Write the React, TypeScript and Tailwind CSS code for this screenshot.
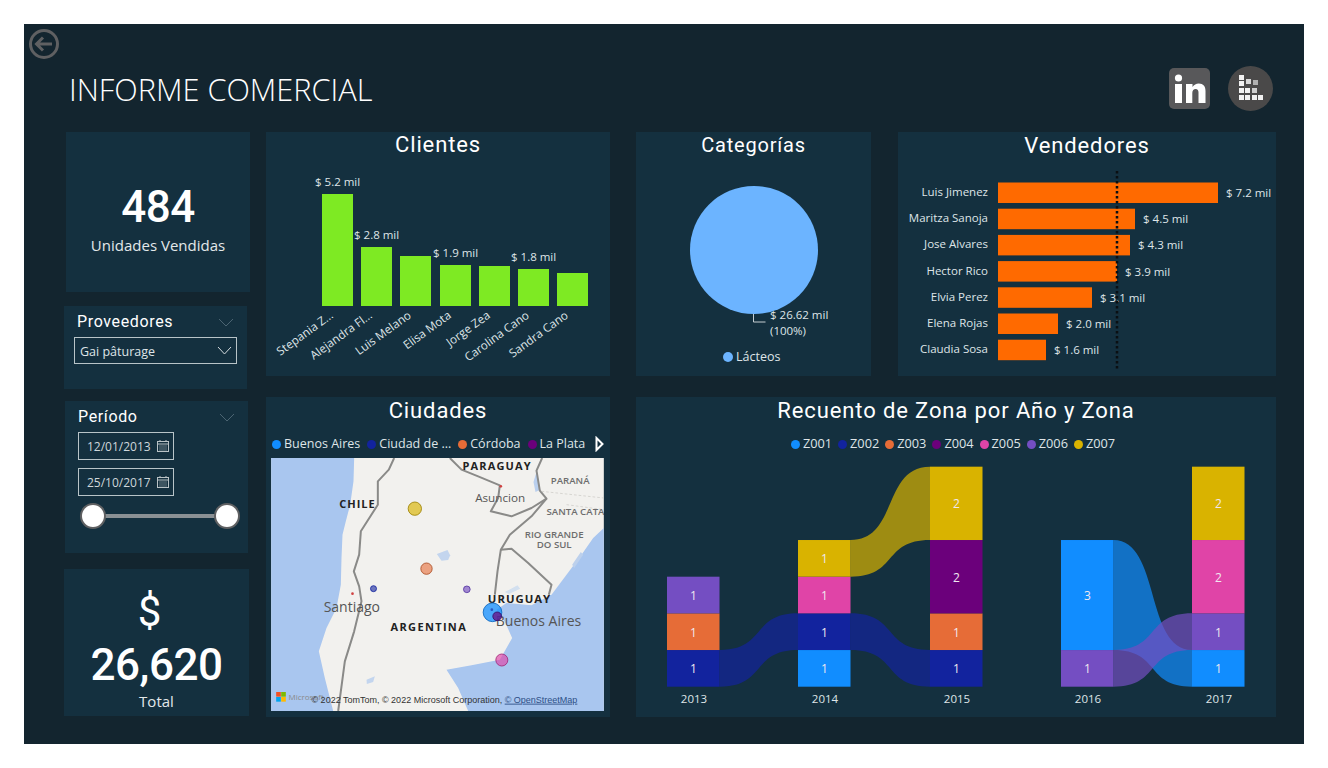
const din = "font-['Roboto',sans-serif]"
const segoe = "font-['Open_Sans',sans-serif]"

const clientes = [
  { name: 'Stepania Z...', x: 322, top: 194, value: '$ 5.2 mil', lx: 315, ly: 186 },
  { name: 'Alejandra Fl...', x: 361, top: 247, value: '$ 2.8 mil', lx: 354, ly: 239 },
  { name: 'Luis Melano', x: 400, top: 256 },
  { name: 'Elisa Mota', x: 440, top: 265, value: '$ 1.9 mil', lx: 433, ly: 257 },
  { name: 'Jorge Zea', x: 479, top: 266 },
  { name: 'Carolina Cano', x: 518, top: 269, value: '$ 1.8 mil', lx: 511, ly: 261 },
  { name: 'Sandra Cano', x: 557, top: 273 },
]

const vendedores = [
  { name: 'Luis Jimenez', w: 220, value: '$ 7.2 mil' },
  { name: 'Maritza Sanoja', w: 137, value: '$ 4.5 mil' },
  { name: 'Jose Alvares', w: 132, value: '$ 4.3 mil' },
  { name: 'Hector Rico', w: 119, value: '$ 3.9 mil' },
  { name: 'Elvia Perez', w: 94, value: '$ 3.1 mil' },
  { name: 'Elena Rojas', w: 60, value: '$ 2.0 mil' },
  { name: 'Claudia Sosa', w: 48, value: '$ 1.6 mil' },
]

const zonas = [
  { name: 'Z001', color: 'bg-[#118dff]' },
  { name: 'Z002', color: 'bg-[#12239e]' },
  { name: 'Z003', color: 'bg-[#e66c37]' },
  { name: 'Z004', color: 'bg-[#6b007b]' },
  { name: 'Z005', color: 'bg-[#e044a7]' },
  { name: 'Z006', color: 'bg-[#744ec2]' },
  { name: 'Z007', color: 'bg-[#d9b300]' },
]

const ciudades = [
  { name: 'Buenos Aires', color: 'bg-[#118dff]' },
  { name: 'Ciudad de ...', color: 'bg-[#12239e]' },
  { name: 'Córdoba', color: 'bg-[#e66c37]' },
  { name: 'La Plata', color: 'bg-[#6b007b]' },
]

// y of each stacked unit, bottom to top
const lvl = (n: number) => 686.7 - n * 36.67

const columnas = [
  {
    x: 667,
    year: '2013',
    segs: [
      { c: '#12239e', from: 0, n: 1 },
      { c: '#e66c37', from: 1, n: 1 },
      { c: '#744ec2', from: 2, n: 1 },
    ],
  },
  {
    x: 798,
    year: '2014',
    segs: [
      { c: '#118dff', from: 0, n: 1 },
      { c: '#12239e', from: 1, n: 1 },
      { c: '#e044a7', from: 2, n: 1 },
      { c: '#d9b300', from: 3, n: 1 },
    ],
  },
  {
    x: 930,
    year: '2015',
    segs: [
      { c: '#12239e', from: 0, n: 1 },
      { c: '#e66c37', from: 1, n: 1 },
      { c: '#6b007b', from: 2, n: 2 },
      { c: '#d9b300', from: 4, n: 2 },
    ],
  },
  {
    x: 1061,
    year: '2016',
    segs: [
      { c: '#744ec2', from: 0, n: 1 },
      { c: '#118dff', from: 1, n: 3 },
    ],
  },
  {
    x: 1192,
    year: '2017',
    segs: [
      { c: '#118dff', from: 0, n: 1 },
      { c: '#744ec2', from: 1, n: 1 },
      { c: '#e044a7', from: 2, n: 2 },
      { c: '#d9b300', from: 4, n: 2 },
    ],
  },
]

const ribbon = (x0: number, a0: number, a1: number, x1: number, b0: number, b1: number) => {
  const m0 = x0 + (x1 - x0) * 0.6
  const m1 = x1 - (x1 - x0) * 0.6
  return `M${x0} ${a0}C${m0} ${a0} ${m1} ${b0} ${x1} ${b0}L${x1} ${b1}C${m1} ${b1} ${m0} ${a1} ${x0} ${a1}Z`
}

const cintas = [
  { c: '#12239e', d: ribbon(719.5, lvl(1), lvl(0), 798, lvl(2), lvl(1)) },
  { c: '#12239e', d: ribbon(850.5, lvl(2), lvl(1), 930, lvl(1), lvl(0)) },
  { c: '#d9b300', d: ribbon(850.5, lvl(4), lvl(3), 930, lvl(6), lvl(4)) },
  { c: '#118dff', d: ribbon(1113.5, lvl(4), lvl(1), 1192, lvl(1), lvl(0)) },
  { c: '#744ec2', d: ribbon(1113.5, lvl(1), lvl(0), 1192, lvl(2), lvl(1)) },
]

const chileBorder = 'M388 190L372 225 339 260 339 330 288 410 283 480 267 530 283 575 290 620 268 710 240 800 232 860 220 949'

function Panel({ className, children }: { className: string; children?: React.ReactNode }) {
  return <div className={`bg-[#14303f] ${className}`}>{children}</div>
}

function Title({ children, className = 'text-[22px]' }: { children: React.ReactNode; className?: string }) {
  return (
    <h2 className={`${din} text-center leading-[26px] tracking-[0.04em] text-white ${className}`}>
      {children}
    </h2>
  )
}

function Chevron({ className, w = 16 }: { className: string; w?: number }) {
  return (
    <svg className={className} width={w} height="9" viewBox={`0 0 ${w} 9`} fill="none" stroke="currentColor" strokeWidth="1">
      <path d={`M1 1l${w / 2 - 1} 7 ${w / 2 - 1}-7`} />
    </svg>
  )
}

function Fecha({ value }: { value: string }) {
  return (
    <div className="flex items-center justify-between w-[96px] h-[28px] border border-[#b8c4c8] pl-[8px] pr-[3px]">
      <span className={`${segoe} text-[12px] pt-[1px] text-[#cfd7db]`}>{value}</span>
      <svg width="14" height="14" viewBox="0 0 14 14" fill="none" stroke="#b9c2c6" strokeWidth="1">
        <rect x="1.5" y="2.5" width="11" height="10" />
        <path d="M1.5 5h11M4 1v2M10 1v2" />
        <path d="M3.5 7h7M3.5 9h7M3.5 11h7" strokeDasharray="1 1" />
      </svg>
    </div>
  )
}

function MapaSvg() {
  // drawn in a 3x grid so the coast points are easy to place
  return (
    <svg className="block w-[333px] h-[253px]" viewBox="19 190 998 759">
      <defs>
        <filter id="suave" x="-5%" y="-5%" width="110%" height="110%">
          <feGaussianBlur stdDeviation="2" />
        </filter>
      </defs>
      <rect x="19" y="190" width="998" height="759" fill="#f2f1ee" />
      <g filter="url(#suave)">
        <path
          d="M19 190H268L266 260 256 330 243 380 233 420 230 490 228 570 215 640 185 700 162 770 180 850 205 949H19Z"
          fill="#a9c6ef"
        />
        <path
          d="M1017 400L985 430 950 480 905 540 860 600 800 632 725 625 695 645 722 685 742 730 705 795 620 812 545 825 580 880 610 949H1017Z"
          fill="#a9c6ef"
        />
        <path d="M816 228L826 285 812 292 806 262Z" fill="#b9cfee" />
        <path d="M516 478L548 466 556 482 550 496 530 498Z" fill="#c3d5ee" />
        <path d="M720 592L758 572 766 582 732 598Z" fill="#d3e0ef" />
        <path d="M922 510L948 472 955 480 928 520Z" fill="#bcd0ec" />
        <path d="M305 855L330 845 325 862 306 868Z" fill="#c3d5ee" />
        <g fill="none" stroke="#8a8a88" strokeWidth="6" strokeLinejoin="round">
          <path d={chileBorder} />
          <path d="M555 190L590 225 640 245 705 272 700 310 678 350 740 365 800 340 845 312 825 288 815 228 832 190" />
          <path d="M845 312L800 365 735 420 708 465 698 530 690 600" />
          <path d="M708 465L740 462 790 505 860 570 852 600" />
        </g>
        <path d="M830 290L1017 310M905 330L1017 345" fill="none" stroke="#c9c7c2" strokeWidth="2" strokeDasharray="8 6" />
      </g>
      <g className="font-['Open_Sans',sans-serif]">
        <text x="278" y="340" textAnchor="middle" fontSize="33" fontWeight="700" letterSpacing="3" fill="#222">CHILE</text>
        <text x="697" y="226" textAnchor="middle" fontSize="33" fontWeight="700" letterSpacing="3.5" fill="#222">PARAGUAY</text>
        <text x="492" y="708" textAnchor="middle" fontSize="33" fontWeight="700" letterSpacing="4" fill="#222">ARGENTINA</text>
        <text x="764" y="624" textAnchor="middle" fontSize="34" fontWeight="700" letterSpacing="3" fill="#222">URUGUAY</text>
        <text x="916" y="269" textAnchor="middle" fontSize="29" fontWeight="600" fill="#6d6d6d">PARANÁ</text>
        <text x="932" y="360" textAnchor="middle" fontSize="29" fontWeight="600" fill="#6d6d6d">SANTA CATA</text>
        <text x="868" y="429" textAnchor="middle" fontSize="29" fontWeight="600" fill="#6d6d6d">RIO GRANDE</text>
        <text x="868" y="459" textAnchor="middle" fontSize="29" fontWeight="600" fill="#6d6d6d">DO SUL</text>
        <text x="706" y="323" textAnchor="middle" fontSize="35" fill="#555">Asuncion</text>
        <text x="261" y="651" textAnchor="middle" fontSize="42" fill="#555">Santiago</text>
        <text x="821" y="694" textAnchor="middle" fontSize="42" fill="#555">Buenos Aires</text>
      </g>
      <circle cx="708" cy="275" r="4" fill="#d04040" />
      <circle cx="263" cy="597" r="4" fill="#d04040" />
      <circle cx="450" cy="342" r="20" fill="#d9b300" fillOpacity="0.65" stroke="#9c8100" strokeWidth="2.5" />
      <circle cx="485" cy="522" r="17" fill="#e66c37" fillOpacity="0.6" stroke="#a94a20" strokeWidth="2.5" />
      <circle cx="326" cy="582" r="9" fill="#12239e" fillOpacity="0.6" stroke="#12239e" strokeWidth="2.5" />
      <circle cx="606" cy="584" r="10" fill="#744ec2" fillOpacity="0.65" stroke="#5435a0" strokeWidth="2.5" />
      <circle cx="683" cy="653" r="28" fill="#118dff" fillOpacity="0.75" stroke="#0a65bd" strokeWidth="2.5" />
      <circle cx="681" cy="645" r="4" fill="#12239e" fillOpacity="0.6" />
      <circle cx="697" cy="665" r="13" fill="#6b007b" fillOpacity="0.7" stroke="#32106b" strokeWidth="2.5" />
      <circle cx="711" cy="796" r="18" fill="#e044a7" fillOpacity="0.65" stroke="#a02878" strokeWidth="2.5" />
      <g>
        <rect x="34" y="892" width="14" height="14" fill="#f25022" />
        <rect x="49" y="892" width="14" height="14" fill="#7fba00" />
        <rect x="34" y="907" width="14" height="14" fill="#00a4ef" />
        <rect x="49" y="907" width="14" height="14" fill="#ffb900" />
        <text x="71" y="916" fontSize="24" fill="#8a8a8a" className="font-['Open_Sans',sans-serif]">Microsoft</text>
      </g>
      <text x="140" y="924" fontSize="27" fill="#333" className="font-['Liberation_Sans',sans-serif]">
        © 2022 TomTom, © 2022 Microsoft Corporation,{' '}
        <tspan fill="#2d4f86" textDecoration="underline">© OpenStreetMap</tspan>
      </text>
    </svg>
  )
}

export default function App() {
  return (
    <div className="w-[1328px] h-[768px] bg-white p-[24px] overflow-hidden">
      <div className="w-[1280px] h-[720px] bg-[#13252f] flex flex-col">
        <header className="h-[108px] pl-[5px] pt-[5px]">
          <svg className="block" width="30" height="30" viewBox="0 0 30 30" fill="none" stroke="#5f6062" strokeWidth="3">
            <circle cx="15" cy="15" r="13.5" />
            <path d="M23 15H8M14 8.5L7.5 15l6.5 6.5" />
          </svg>
          <div className="flex items-start justify-between pl-[40px] pr-[31px]">
            <h1 className={`${segoe} font-light text-[30.7px] leading-[40px] mt-[10px] text-white`}>INFORME COMERCIAL</h1>
            <div className="flex items-center gap-[18px] mt-[7px]">
              <svg width="41" height="41" viewBox="0 0 41 41">
                <rect width="41" height="41" rx="5" fill="#58585a" />
                <circle cx="9.5" cy="10" r="3.6" fill="#fff" />
                <rect x="6" y="16" width="7" height="19" fill="#fff" />
                <path d="M17 16h6.5v3c1.5-2.3 3.6-3.5 6.3-3.5 4.5 0 6.7 2.8 6.7 7.5V35h-7V24.5c0-2.3-.9-3.5-2.8-3.5-2 0-3.4 1.3-3.4 3.9V35H17Z" fill="#fff" />
              </svg>
              <svg width="45" height="45" viewBox="0 0 45 45">
                <circle cx="22.5" cy="22.5" r="22.5" fill="#4a4949" />
                <g fill="#f1f1f1">
                  <rect x="11" y="9" width="5" height="5" />
                  <rect x="11" y="15" width="5" height="5" />
                  <rect x="11" y="22" width="5" height="5" />
                  <rect x="17" y="22" width="5" height="5" />
                  <rect x="11" y="29" width="5" height="5" />
                  <rect x="17" y="29" width="5" height="5" />
                  <rect x="24" y="29" width="5" height="5" />
                  <rect x="30" y="29" width="5" height="5" />
                  <rect x="24" y="22" width="5" height="5" fill="#cfcfcf" />
                  <rect x="18" y="13" width="5" height="5" fill="#d8d8d8" />
                  <rect x="25" y="14" width="5" height="5" fill="#b0b0b0" />
                </g>
              </svg>
            </div>
          </div>
        </header>

        <div className="flex pl-[40px]">
          <aside className="w-[186px] flex flex-col">
            <Panel className="ml-[2px] w-[184px] h-[160px] flex flex-col items-center pt-[47px]">
              <span className={`${din} font-medium text-[44px] leading-[56px] tracking-[-0.01em] text-white`}>484</span>
              <span className={`${segoe} text-[15px] leading-[20px] text-[#e3e8ea]`}>Unidades Vendidas</span>
            </Panel>

            <Panel className="mt-[14px] w-[183px] h-[83px] pt-[5px] pl-[10px] pr-[10px]">
              <div className="flex items-center justify-between pl-[3px] pr-[3px] h-[22px]">
                <span className={`${din} text-[16px] tracking-[0.04em] text-white`}>Proveedores</span>
                <Chevron className="text-[#4b6472]" />
              </div>
              <div className="mt-[4px] flex items-center justify-between h-[27px] border border-[#b8c4c8] pl-[5px] pr-[4px]">
                <span className={`${segoe} text-[12.5px] pt-[3px] text-[#dfe5e8]`}>Gai pâturage</span>
                <Chevron className="text-[#d4dbde]" w={15} />
              </div>
            </Panel>

            <Panel className="mt-[12px] ml-[1px] w-[183px] h-[152px] pt-[5px] pl-[13px] pr-[10px]">
              <div className="flex items-center justify-between h-[22px] pr-[3px]">
                <span className={`${din} text-[16px] tracking-[0.04em] text-white`}>Período</span>
                <Chevron className="text-[#4b6472]" />
              </div>
              <div className="flex flex-col gap-[8px] mt-[4px]">
                <Fecha value="12/01/2013" />
                <Fecha value="25/10/2017" />
              </div>
              <div className="relative mt-[7px] h-[26px] ml-[2px] w-[160px] flex items-center">
                <div className="w-full mx-[12px] h-[4px] bg-[#8a9094]" />
                <div className="absolute left-0 w-[26px] h-[26px] rounded-full bg-white border-2 border-[#5f6062]" />
                <div className="absolute right-0 w-[26px] h-[26px] rounded-full bg-white border-2 border-[#5f6062]" />
              </div>
            </Panel>

            <Panel className="mt-[16px] w-[185px] h-[147px] flex flex-col items-center pt-[15px]">
              <span className={`${din} text-[42px] leading-[56px] text-white mr-[14px]`}>$</span>
              <span className={`${din} font-medium text-[44px] leading-[56px] tracking-[-0.01em] text-white -mt-[3px]`}>26,620</span>
              <span className={`${segoe} text-[15px] leading-[20px] text-[#e3e8ea] -mt-[2px]`}>Total</span>
            </Panel>
          </aside>

          <div className="ml-[16px] flex flex-col gap-[21px]">
            <div className="flex">
              <Panel className="w-[344px] h-[244px]">
                <Title>Clientes</Title>
                <svg className="block" width="344" height="218" viewBox="266 158 344 218">
                  {clientes.map((c) => (
                    <g key={c.name} className="font-['Open_Sans',sans-serif]">
                      <rect x={c.x} y={c.top} width="31" height={306 - c.top} fill="#7eea23" />
                      {c.value && (
                        <text x={c.lx} y={c.ly} fontSize="11.5" fill="#dfe5e8">
                          {c.value}
                        </text>
                      )}
                      <text
                        x={c.x + 12}
                        y={317}
                        fontSize="11.7"
                        fill="#dfe5e8"
                        textAnchor="end"
                        transform={`rotate(-36 ${c.x + 12} 317)`}
                      >
                        {c.name}
                      </text>
                    </g>
                  ))}
                </svg>
              </Panel>

              <Panel className="ml-[26px] w-[235px] h-[244px]">
                <Title className="text-[20px]">Categorías</Title>
                <svg className="block" width="235" height="218" viewBox="636 158 235 218">
                  <circle cx="754" cy="250" r="64" fill="#6cb4ff" />
                  <path d="M753.5 314v8h12" fill="none" stroke="#c5cdd1" strokeWidth="1" />
                  <g className="font-['Open_Sans',sans-serif]" fontSize="11.5" fill="#dfe5e8">
                    <text x="770" y="319">$ 26.62 mil</text>
                    <text x="770" y="335">(100%)</text>
                  </g>
                  <circle cx="728" cy="357" r="5" fill="#6cb4ff" />
                  <text x="736" y="361" fontSize="12.5" fill="#dfe5e8" className="font-['Open_Sans',sans-serif]">Lácteos</text>
                </svg>
              </Panel>

              <Panel className="ml-[27px] w-[378px] h-[244px]">
                <Title className="text-[22px] pt-[1px]">Vendedores</Title>
                <svg className="block" width="378" height="217" viewBox="898 159 378 217">
                  {vendedores.map((v, i) => (
                    <g key={v.name} className="font-['Open_Sans',sans-serif]" fontSize="11.5" fill="#dfe5e8">
                      <rect x="998" y={182.5 + i * 26.2} width={v.w} height="20.5" fill="#ff6a00" />
                      <text x="988" y={196 + i * 26.2} textAnchor="end">{v.name}</text>
                      <text x={998 + v.w + 8} y={197 + i * 26.2}>{v.value}</text>
                    </g>
                  ))}
                  <path d="M1117 171V370" stroke="#0b0f12" strokeWidth="2.5" strokeDasharray="2.5 2.5" />
                </svg>
              </Panel>
            </div>

            <div className="flex">
              <Panel className="w-[344px] h-[320px] flex flex-col">
                <Title className="text-[22px] pt-[1px]">Ciudades</Title>
                <div className={`${segoe} flex items-center justify-between h-[34px] pt-[6px] pl-[6px] pr-[5px] text-[12.5px] text-[#dfe5e8]`}>
                  <div className="flex items-center gap-[7px]">
                    {ciudades.map((c) => (
                      <span key={c.name} className="flex items-center gap-[3px]">
                        <i className={`block w-[9px] h-[9px] rounded-full ${c.color}`} />
                        {c.name}
                      </span>
                    ))}
                  </div>
                  <svg width="10" height="16" viewBox="0 0 10 16" fill="none" stroke="#fff" strokeWidth="2">
                    <path d="M1.5 2v12l6-6Z" />
                  </svg>
                </div>
                <div className="ml-[5px] w-[333px]">
                  <MapaSvg />
                </div>
              </Panel>

              <Panel className="ml-[26px] w-[640px] h-[320px]">
                <Title className="text-[22px] pt-[1px]">Recuento de Zona por Año y Zona</Title>
                <div className={`${segoe} flex justify-center gap-[6px] h-[34px] pt-[6px] mr-[6px] items-center text-[12.75px] text-[#dfe5e8]`}>
                  {zonas.map((z) => (
                    <span key={z.name} className="flex items-center gap-[3px]">
                      <i className={`block w-[9px] h-[9px] rounded-full ${z.color}`} />
                      {z.name}
                    </span>
                  ))}
                </div>
                <svg className="block" width="640" height="259" viewBox="636 458 640 259">
                  {cintas.map((r, i) => (
                    <path key={i} d={r.d} fill={r.c} fillOpacity="0.7" />
                  ))}
                  {columnas.map((col) => (
                    <g key={col.year} className="font-['Open_Sans',sans-serif]">
                      {col.segs.map((s) => (
                        <g key={s.from}>
                          <rect x={col.x} y={lvl(s.from + s.n)} width="52.5" height={s.n * 36.67} fill={s.c} />
                          <text
                            x={col.x + 26.5}
                            y={lvl(s.from + s.n / 2) + 5}
                            textAnchor="middle"
                            fontSize="12"
                            fill="#f0e8f0"
                          >
                            {s.n}
                          </text>
                        </g>
                      ))}
                      <text x={col.x + 27} y="703" textAnchor="middle" fontSize="11.5" fill="#dfe5e8">
                        {col.year}
                      </text>
                    </g>
                  ))}
                </svg>
              </Panel>
            </div>
          </div>
        </div>
      </div>
    </div>
  )
}
